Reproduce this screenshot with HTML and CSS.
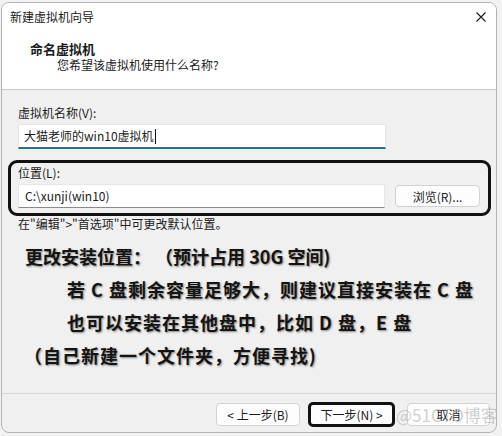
FILE: index.html
```html
<!DOCTYPE html>
<html lang="zh-CN">

<head>
    <meta charset="UTF-8">
    <title>新建虚拟机向导</title>
    <link rel="stylesheet" href="styles.css">
</head>

<body>
    <div class="window">
        <div class="header">
            <div class="title-row">
                <span class="title">新建虚拟机向导</span>
                <svg class="close" width="10" height="10" viewBox="0 0 10 10">
                    <path d="M0.5 0.5 L9.5 9.5 M9.5 0.5 L0.5 9.5" stroke="#1b1b1b" stroke-width="1.1" fill="none" />
                </svg>
            </div>
            <div class="heading">命名虚拟机</div>
            <div class="subheading">您希望该虚拟机使用什么名称?</div>
        </div>

        <div class="content">
            <div class="label">虚拟机名称(V):</div>
            <div class="input input-active">大猫老师的win10虚拟机<span class="caret"></span></div>

            <div class="highlight">
                <div class="label label-tight">位置(L):</div>
                <div class="row">
                    <div class="input input-path">C:\xunji(win10)</div>
                    <button class="btn btn-browse">浏览(R)...</button>
                </div>
            </div>
            <div class="hint">在"编辑"&gt;"首选项"中可更改默认位置。</div>

            <!-- annotation -->
            <div class="note">
                <p class="note-first">更改安装位置： （预计占用 30G 空间)</p>
                <p class="note-indent">若 C 盘剩余容量足够大，则建议直接安装在 C 盘</p>
                <p class="note-indent">也可以安装在其他盘中，比如 D 盘，E 盘</p>
                <p class="note-last">（自己新建一个文件夹，方便寻找)</p>
            </div>
        </div>

        <div class="footer">
            <button class="btn btn-nav">&lt; 上一步(B)</button>
            <button class="btn btn-nav btn-next">下一步(N) &gt;</button>
            <button class="btn btn-nav btn-cancel">取消</button>
            <span class="watermark">@51CTO博客</span>
        </div>
    </div>
</body>

</html>
```

FILE: styles.css
```css
body {
    margin: 0;
    padding: 2px 0 0 1px;
    background-color: #f2f2f2;
    font-family: "Noto Sans CJK SC", "Liberation Sans", sans-serif;
    font-size: 12px;
    color: #1b1b1b;
}

.window {
    width: 496px;
    height: 431px;
    box-sizing: border-box;
    border: 1px solid #b4b4b4;
    border-radius: 8px;
    background-color: #f0f0f0;
    overflow: hidden;
    display: flex;
    flex-direction: column;
}

.header {
    height: 86px;
    background: #ffffff;
    border-bottom: 1px solid #c9c9c9;
    flex-shrink: 0;
}

.title-row {
    display: flex;
    justify-content: space-between;
    align-items: center;
    height: 16px;
    margin-top: 6px;
    padding: 0 10px 0 8px;
}

.title {
    line-height: 16px;
}

.close {
    display: block;
}

.heading {
    margin: 16px 0 0 28px;
    font-weight: bold;
    font-size: 13px;
    line-height: 16px;
}

.subheading {
    margin-left: 55px;
    line-height: 16px;
}

.content {
    height: 303px;
    padding-left: 16px;
    border-bottom: 1px solid #d6d6d6;
    flex-shrink: 0;
}

.label {
    margin-top: 15px;
    line-height: 16px;
}

.label-tight {
    margin-top: 2px;
}

.input {
    box-sizing: border-box;
    background: #ffffff;
    border: 1px solid #e6e6e6;
    line-height: 20px;
    padding-left: 5px;
    white-space: nowrap;
}

.input-active {
    width: 368px;
    height: 25px;
    margin-top: 3px;
    border-bottom: 2px solid #2a7090;
    display: flex;
    align-items: center;
}

.caret {
    display: inline-block;
    width: 1px;
    height: 15px;
    background: #111;
    margin-left: 1px;
}

.highlight {
    width: 483px;
    box-sizing: border-box;
    margin: 11px 0 0 -10px;
    padding: 0 0 5px 7px;
    border: 3px solid #111111;
    border-radius: 9px;
}

.row {
    display: flex;
    align-items: center;
    gap: 10px;
    margin-top: 3px;
}

.input-path {
    width: 367px;
    height: 24px;
    border-bottom-color: #8a8a8a;
    padding-left: 6px;
    display: flex;
    align-items: center;
}

.btn {
    box-sizing: border-box;
    font-family: inherit;
    font-size: 12px;
    color: #1b1b1b;
    background: #fdfdfd;
    border: 1px solid #d2d2d2;
    border-radius: 4px;
    padding: 0;
}

.btn-browse {
    width: 85px;
    height: 22px;
}

.hint {
    line-height: 15px;
    color: #222;
}

.note {
    margin-top: 9px;
    font-size: 18px;
    font-weight: bold;
    color: #141414;
    text-shadow: 1px 1px 2px rgba(0, 0, 0, 0.45);
}

.note p {
    margin: 0;
    line-height: 33px;
    white-space: pre;
}

.note-first {
    padding-left: 7px;
}

.note-indent {
    padding-left: 49px;
    letter-spacing: 1px;
}

.note-last {
    padding-left: 6px;
    letter-spacing: 1px;
}

.footer {
    position: relative;
    flex: 1;
    display: flex;
    justify-content: flex-end;
    align-items: flex-start;
    padding: 9px 6px 0 0;
}

.btn-nav {
    width: 84px;
    height: 23px;
    margin-left: 8px;
}

.btn-next {
    width: 87px;
    height: 25px;
    margin-top: -1px;
    border: 3px solid #111111;
    border-radius: 5px;
}

.btn-cancel {
    width: 83px;
    margin-left: 12px;
}

.watermark {
    position: absolute;
    left: 394px;
    top: 8px;
    font-size: 17px;
    color: rgba(170, 170, 170, 0.55);
    white-space: nowrap;
}
```
